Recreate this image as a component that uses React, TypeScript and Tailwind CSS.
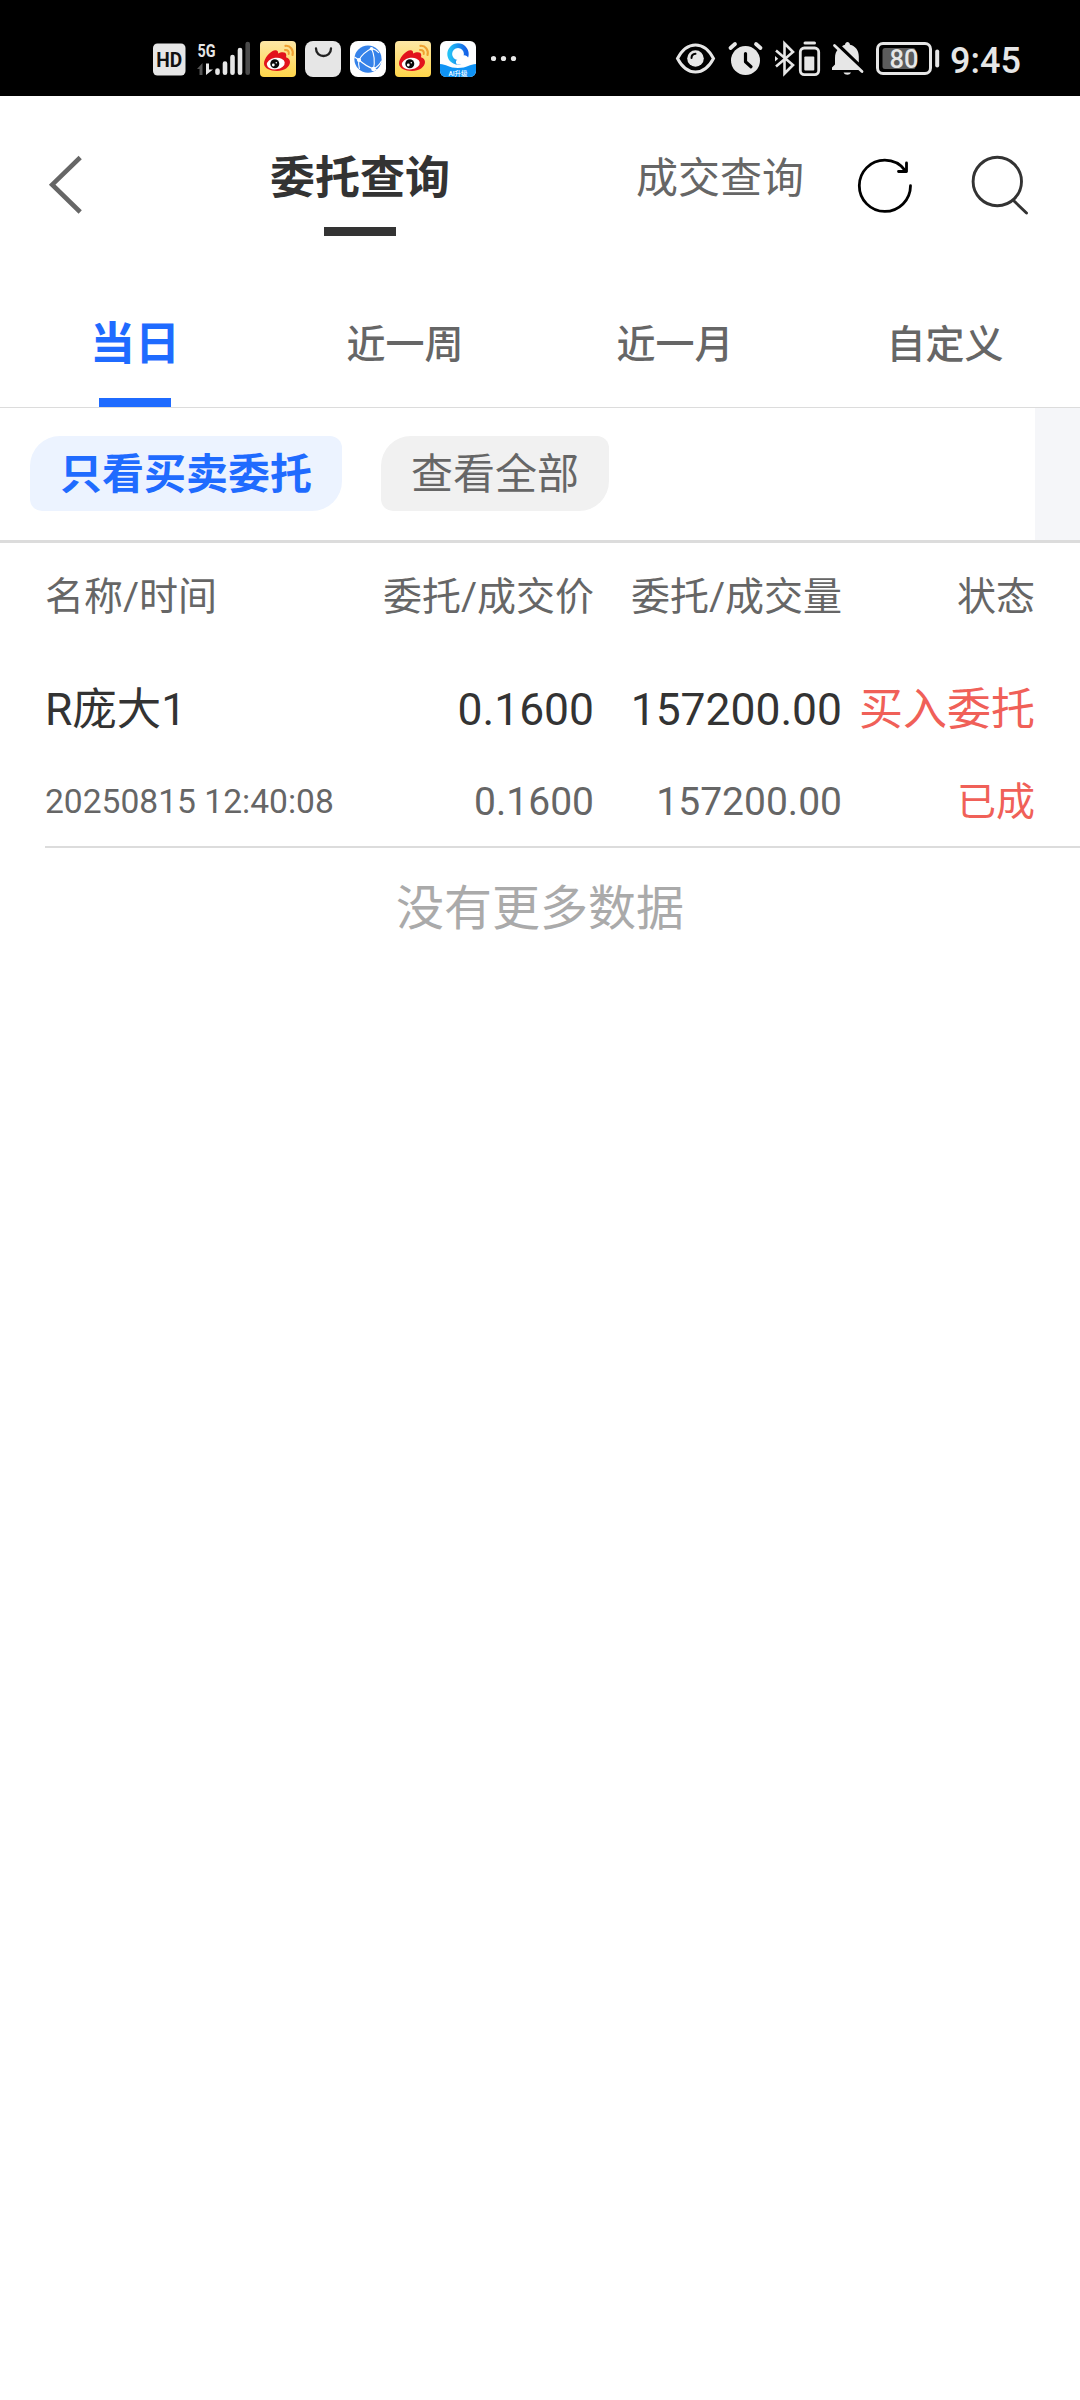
import React from "react";

const FONT = "font-['Roboto','Noto_Sans_CJK_SC',sans-serif]";
const INK = "#e6e6e6";

type GlyphProps = { x: number; w: number; className?: string; children: React.ReactNode };

/** Status bar glyph; the viewBox uses status bar coordinates. */
function Glyph({ x, w, className = "", children }: GlyphProps) {
  return (
    <svg className={`shrink-0 ${className}`} width={w} height={40} viewBox={`${x} 39 ${w} 40`} fill="none">
      {children}
    </svg>
  );
}

function Weibo({ id }: { id: string }) {
  return (
    <Glyph x={0} w={36} className="mr-[9px]">
      <defs>
        <linearGradient id={id} x1="0" y1="0" x2="0" y2="1">
          <stop offset="0" stopColor="#fde7a6" />
          <stop offset="1" stopColor="#ffd54a" />
        </linearGradient>
      </defs>
      <rect x="0" y="41" width="36" height="36" rx="4" fill={`url(#${id})`} />
      <path
        d="M4 63.500c0-5 6-12.500 11-13.300 2.500-.3 3.500 1.300 3 3.300 3.200-1.500 8-2 8.300 1.500.1 1-.3 1.700-.3 2.200 2.500.8 4 2.600 4 4.800 0 5-6 9-13 9s-13-2.900-13-7.500z"
        fill="#e2131c"
      />
      <ellipse cx="15.800" cy="63.600" rx="9" ry="5.800" fill="#fff" transform="rotate(-8 15.800 63.600)" />
      <circle cx="14.800" cy="63.800" r="4.500" fill="#0a0a0a" />
      <circle cx="13.300" cy="65" r="1.400" fill="#fff" />
      <circle cx="16.300" cy="62.700" r=".8" fill="#fff" />
      <path d="M25.500 45.800c4.800-.4 8.300 4 7 9.200" stroke="#f0a030" strokeWidth="2.200" strokeLinecap="round" />
      <path d="M25 50c2.800-.3 4.300 1.700 3.700 4" stroke="#f0a030" strokeWidth="2" strokeLinecap="round" />
    </Glyph>
  );
}

function StatusBar() {
  return (
    <div className="flex h-24 items-start bg-black pt-[39px]">
      <div className="flex h-10 flex-1 items-center pl-[153px]">
        <Glyph x={153} w={33} className="mr-[11px]">
          <rect x="153" y="43.500" width="32.500" height="32" rx="4.500" fill={INK} />
          <text x="169.300" y="66.700" textAnchor="middle" fontSize="20.500" fontWeight="700" fill="#111" textLength="26" lengthAdjust="spacingAndGlyphs" className={FONT}>
            HD
          </text>
        </Glyph>
        <Glyph x={197} w={54} className="mr-[9px]">
          <text x="197.500" y="56.500" fontSize="19" fontWeight="700" fill={INK} textLength="18" lengthAdjust="spacingAndGlyphs" className={FONT}>
            5G
          </text>
          <path d="M197 69l5.500-6v12h-3v-6z" fill="#555" />
          <path d="M206 63.500h3v6h4L206 75z" fill={INK} />
          <path d="M217.500 70.500v2.200M225 63.500v9.200M232.500 57v15.700M240 50v22.700" stroke={INK} strokeWidth="4.600" strokeLinecap="round" />
          <path d="M247.700 44v28.700" stroke="#4a4a4a" strokeWidth="4.600" strokeLinecap="round" />
        </Glyph>
        <Weibo id="weibo-a" />
        <Glyph x={305} w={36} className="mr-[9px]">
          <rect x="305" y="41" width="36" height="36" rx="8" fill={INK} />
          <path d="M316 48.500c0 10 15 10 15 0" stroke="#222" strokeWidth="2.300" strokeLinecap="round" />
        </Glyph>
        <Glyph x={350} w={36} className="mr-[9px]">
          <rect x="350" y="41" width="36" height="36" rx="8" fill="#fff" />
          <circle cx="368" cy="59.200" r="13.600" fill="#3683ea" />
          <g stroke="#fff" strokeWidth="1.100">
            <path d="M371.500 48.500c-5 2.500-10 6.500-12.500 11.500 4 3.500 9 7 14.500 9 1.500-7 1-14-2-20.500z" />
            <path d="M359 60l-4.500-3M359 60c-.8 3-.5 6 .5 9M373.500 69l3.500 1M373.500 69c3-1.500 6-4 8-8M371.500 48.500c3 .5 5.500 2 7.500 4.500" />
          </g>
          <circle cx="371.500" cy="48.800" r="1.800" fill="#fff" />
          <circle cx="359" cy="60" r="2.100" fill="#fff" />
          <circle cx="373.500" cy="69" r="2.300" fill="#fff" />
        </Glyph>
        <Weibo id="weibo-b" />
        <Glyph x={440} w={36} className="mr-[15px]">
          <defs>
            <linearGradient id="qq-ring" x1="0" y1="0" x2="1" y2="0">
              <stop offset="0" stopColor="#22c0f5" />
              <stop offset="1" stopColor="#1462e8" />
            </linearGradient>
            <clipPath id="qq-clip">
              <rect x="440" y="41" width="36" height="36" rx="6" />
            </clipPath>
          </defs>
          <g clipPath="url(#qq-clip)">
            <rect x="440" y="41" width="36" height="36" fill="#fdfeff" />
            <path d="M440 64c6 0 9 4 18 4s12-4 18-4v13h-36z" fill="#0f93f5" />
            <circle cx="458" cy="54" r="8.300" stroke="url(#qq-ring)" strokeWidth="4.800" />
            <path d="M457 64.500c-2.500-3 0-6 2.500-5.500 1-4.500 7.500-5 9-.5 4-.5 5 5 1.500 6z" fill="#fff" />
            <text x="458" y="75.500" textAnchor="middle" fontSize="6.500" fontWeight="500" fill="#fff" className={FONT}>
              AI升级
            </text>
          </g>
        </Glyph>
        <Glyph x={491} w={26}>
          <circle cx="493.500" cy="58.500" r="2.600" fill={INK} />
          <circle cx="503.500" cy="58.500" r="2.600" fill={INK} />
          <circle cx="513.500" cy="58.500" r="2.600" fill={INK} />
        </Glyph>
      </div>
      <div className="flex h-10 items-center pr-[58px]">
        <Glyph x={675} w={42} className="mr-[10px]">
          <path d="M677.500 58.500c4.500-8.500 11-13.500 18-13.500s13.500 5 18 13.500c-4.500 8.500-11 13.500-18 13.500s-13.500-5-18-13.500z" stroke={INK} strokeWidth="3" />
          <circle cx="695.500" cy="58.500" r="8.300" fill={INK} />
          <path d="M691.500 58c0-2.500 1.500-4 4-4.200" stroke="#000" strokeWidth="2" strokeLinecap="round" />
        </Glyph>
        <Glyph x={727} w={38} className="mr-[10px]">
          <circle cx="745.500" cy="60.500" r="14.500" fill={INK} />
          <path d="M730.500 48l4.500-4M760.500 48l-4.500-4" stroke={INK} strokeWidth="3.800" strokeLinecap="round" />
          <path d="M745.500 53.500v8.200l5.500 5" stroke="#000" strokeWidth="3.200" strokeLinecap="round" strokeLinejoin="round" />
        </Glyph>
        <Glyph x={775} w={46} className="mr-[10px]">
          <path d="M776 50.500l17 14.500-8.500 8.500V43.500l8.500 8.500-17 14.500" stroke={INK} strokeWidth="2.600" />
          <path d="M775 56l3.200 2.700L775 61.500z" fill={INK} />
          <path d="M805 43h9.500" stroke={INK} strokeWidth="3" strokeLinecap="round" />
          <rect x="800.300" y="48" width="18.400" height="26.600" rx="4" stroke={INK} strokeWidth="2.800" />
          <rect x="804.300" y="56.500" width="10" height="14" rx="1" fill={INK} />
        </Glyph>
        <Glyph x={831} w={34} className="mr-[11px]">
          <path d="M838.500 49l22 21H832v-2.500l3-3V58c0-4 1-7 3.500-9zM842 46.200c1-.8 2-1.200 3-1.400.3-1.800 1.300-2.800 2.500-2.800s2.200 1 2.500 2.800c5.500 1.200 8.800 5.700 8.800 11.700v6z" fill={INK} />
          <path d="M843.500 72.500h7.500c-.8 1.500-2 2.200-3.700 2.200s-3-.7-3.800-2.200z" fill={INK} />
          <path d="M834.500 45.500l27.500 26" stroke={INK} strokeWidth="2.800" strokeLinecap="round" />
        </Glyph>
        <Glyph x={876} w={64} className="mr-[10px]">
          <rect x="877.500" y="43.500" width="53" height="30" rx="5.500" stroke={INK} strokeWidth="3" />
          <rect x="882.500" y="48" width="33" height="21" rx="2.500" fill="#5c5c5c" />
          <text x="904" y="67.600" textAnchor="middle" fontSize="25.500" fontWeight="500" fill={INK} className={FONT}>
            80
          </text>
          <path d="M937.200 51.500v14" stroke={INK} strokeWidth="4" strokeLinecap="round" />
        </Glyph>
        <span className="w-[72px] pt-[3px] text-[36px] leading-[40px] font-medium text-[#e6e6e6]">9:45</span>
      </div>
    </div>
  );
}

function NavBar() {
  return (
    <header className="flex h-[180px] pt-[54px]">
      <div className="w-[180px] pl-12">
        <svg width="36" height="72" viewBox="48 150 36 72" fill="none">
          <path d="M80.200 157.500L52.200 184.700l28 27.300" stroke="#666" strokeWidth="4.600" />
        </svg>
      </div>
      <div className="flex w-[360px] flex-col items-center pt-px">
        <h1 className="text-[45px] leading-[56px] font-bold text-[#333]">委托查询</h1>
        <div className="mt-5 h-[9px] w-[72px] bg-[#333]" />
      </div>
      <div className="flex w-[360px] justify-center pt-px text-[42px] leading-[56px] text-[#666]">
        成交查询
      </div>
    </header>
  );
}

/** Refresh and search buttons floating over the right end of the nav bar. */
function NavActions() {
  return (
    <div className="absolute top-[150px] left-[852px] flex gap-[50px]">
      <svg width="66" height="72" viewBox="852 150 66 72" fill="none" stroke="#000" strokeWidth="2.800" strokeLinecap="round" strokeLinejoin="round">
        <path d="M910.500 185.700c0 14.300-11.500 25.700-25.700 25.700s-25.500-11.500-25.500-25.700 11.300-25.500 25.500-25.500c9 0 16 4.300 20.700 10.600" />
        <path d="M906.500 163v8.500h-8" />
      </svg>
      <svg width="66" height="72" viewBox="968 150 66 72" fill="none" stroke="#333" strokeWidth="2.900" strokeLinecap="round">
        <circle cx="997.300" cy="181.500" r="24.200" />
        <path d="M1013.500 200.500l13 12.500" />
      </svg>
    </div>
  );
}

const RANGES = ["当日", "近一周", "近一月", "自定义"];

function RangeTabs() {
  return (
    <nav className="grid h-[132px] grid-cols-4 border-b border-[#dcdcdc]">
      {RANGES.map((label, i) => (
        <div key={label} className="flex flex-col items-center justify-end">
          {i === 0 ? (
            <>
              <span className="mb-[25px] text-[45px] leading-[56px] font-bold text-[#1f6bff]">{label}</span>
              <span className="h-[9px] w-[72px] bg-[#1f6bff]" />
            </>
          ) : (
            <span className="mb-[34px] text-[39px] leading-[56px] font-medium text-[#666]">{label}</span>
          )}
        </div>
      ))}
    </nav>
  );
}

function Filters() {
  const chip = "flex h-[75px] items-center rounded-tl-[30px] rounded-tr-[12px] rounded-br-[30px] rounded-bl-[12px] px-[30px] pt-[3px] text-[42px] leading-[56px]";
  return (
    <div className="flex h-[135px] border-b-[3px] border-[#dcdcdc]">
      <div className="flex flex-1 gap-[39px] pt-7 pl-[30px]">
        <button className={`${chip} bg-[#ecf3ff] font-bold text-[#1f6bff]`}>只看买卖委托</button>
        <button className={`${chip} bg-[#f1f1f1] text-[#666]`}>查看全部</button>
      </div>
      <div className="w-[45px] bg-[#f5f6f9]" />
    </div>
  );
}

function Orders() {
  const cols = "grid grid-cols-[301px_248px_248px_193px] pl-[45px] text-right";
  return (
    <section>
      <div className={`${cols} pt-[26px] text-[39px] leading-[56px] text-[#666]`}>
        <span className="text-left">名称/时间</span>
        <span>委托/成交价</span>
        <span>委托/成交量</span>
        <span>状态</span>
      </div>
      <div className={`${cols} mt-[57px] text-[44.4px] leading-[56px] text-[#333]`}>
        <span className="text-left">R庞大1</span>
        <span>0.1600</span>
        <span>157200.00</span>
        <span className="text-[44px] whitespace-nowrap text-[#f06058]">买入委托</span>
      </div>
      <div className={`${cols} mt-9 text-[39px] leading-[56px] text-[#666]`}>
        <span className="text-left text-[33.6px]">20250815 12:40:08</span>
        <span>0.1600</span>
        <span>157200.00</span>
        <span className="text-[#f06058]">已成</span>
      </div>
      <div className="mt-4 ml-[45px] h-[2px] bg-[#dcdcdc]" />
      <p className="mt-[33px] text-center text-[48px] leading-[56px] text-[#aaa]">没有更多数据</p>
    </section>
  );
}

export default function App() {
  return (
    <main className={`relative h-[2400px] w-[1080px] overflow-hidden bg-white ${FONT}`}>
      <StatusBar />
      <NavBar />
      <NavActions />
      <RangeTabs />
      <Filters />
      <Orders />
    </main>
  );
}
